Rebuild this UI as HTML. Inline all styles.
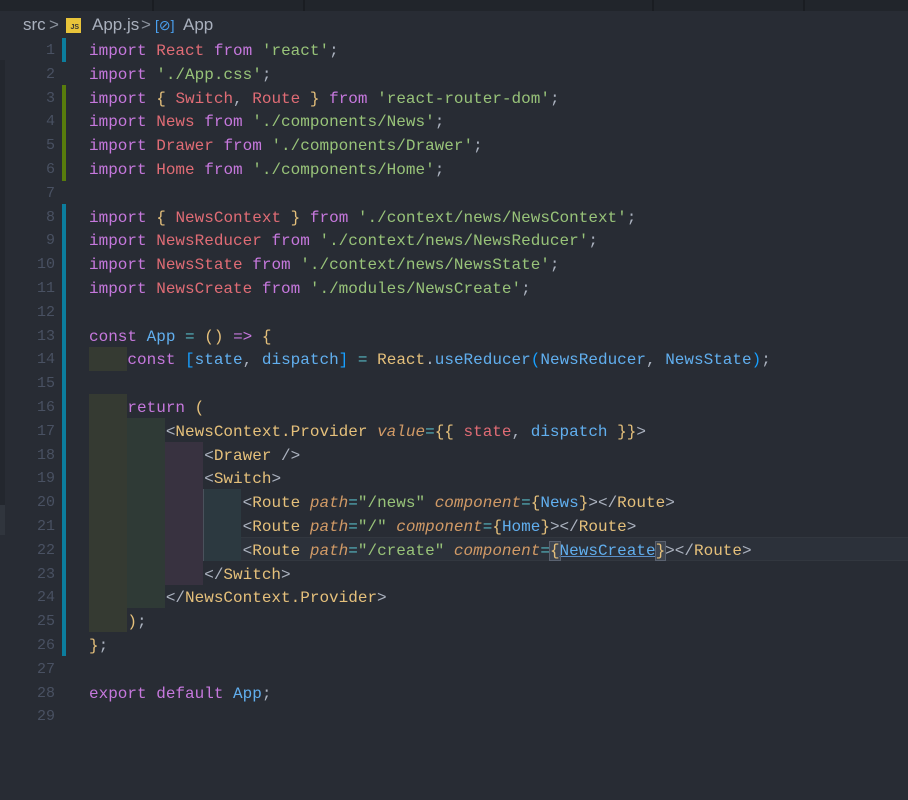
<!DOCTYPE html><html><head><meta charset="utf-8"><style>
body{margin:0;width:908px;height:800px;background:#282c34;overflow:hidden;position:relative;font-family:"Liberation Mono",monospace;}
.tabs{position:absolute;left:0;top:0;width:908px;height:11px;background:#21252b;}
.sep{position:absolute;top:0;width:2px;height:11px;background:#1a1d22}
.bc{position:absolute;top:15px;font:17px "Liberation Sans",sans-serif;color:#a9b0bd;white-space:pre;line-height:20px}
.ln{position:absolute;left:0;width:55px;text-align:right;color:#495162;font-size:15px;height:24px;line-height:24px}
.code{position:absolute;left:89px;font-size:16px;height:24px;line-height:24px;white-space:pre;color:#abb2bf}
.g{position:absolute;width:38px}
.k{color:#c678dd}.v{color:#e06c75}.s{color:#98c379}.y{color:#e5c07b}.o{color:#d19a66}.b{color:#61afef}.c{color:#56b6c2}.i{font-style:italic;color:#d19a66}.p{color:#abb2bf}.br{color:#179fff}
.bar{position:absolute;left:62px;width:4px}
</style></head><body>
<div class="tabs"><div class="sep" style="left:152px"></div><div class="sep" style="left:303px"></div><div class="sep" style="left:652px"></div><div class="sep" style="left:803px"></div></div>
<div style="position:absolute;left:0;top:60px;width:5px;height:450px;background:#23272e"></div>
<div style="position:absolute;left:0;top:505px;width:5px;height:30px;background:#30353d"></div>
<div class="bc" style="left:23px">src</div>
<div class="bc" style="left:49px;color:#8a919c">&gt;</div>
<div style="position:absolute;left:66px;top:18px;width:15px;height:15px;background:#e8c43a;color:#333;font:bold 7px 'Liberation Sans',sans-serif;line-height:20px;text-align:right;box-sizing:border-box;padding-right:2px">JS</div>
<div class="bc" style="left:92px">App.js</div>
<div class="bc" style="left:141px;color:#8a919c">&gt;</div>
<div class="bc" style="left:155px;color:#4aa1f0;font-size:14px">[⊘]</div>
<div class="bc" style="left:183px">App</div>
<!-- current line -->
<div style="position:absolute;left:89px;top:537px;width:819px;height:24px;background:#2c313a;border-top:1px solid #32373f;border-bottom:1px solid #32373f;box-sizing:border-box"></div>
<!-- indent guides -->
<div class="g" style="left:89px;top:347px;height:24px;background:#353a32"></div>
<div class="g" style="left:89px;top:394px;height:238px;background:#353a32"></div>
<div class="g" style="left:127px;top:418px;height:190px;background:#2f3a36"></div>
<div class="g" style="left:165px;top:442px;height:143px;background:#383240"></div>
<div class="g" style="left:203px;top:489px;height:72px;background:#2c3940;border-left:1px solid #4a525c;box-sizing:border-box"></div>
<!-- git bars -->
<div class="bar" style="top:38px;height:24px;background:#0c7d9d"></div>
<div class="bar" style="top:85px;height:96px;background:#587c0c"></div>
<div class="bar" style="top:204px;height:452px;background:#0c7d9d"></div>
<div id="L"></div>
<script>
const lines=[
`<span class=k>import</span> <span class=v>React</span> <span class=k>from</span> <span class=s>'react'</span>;`,
`<span class=k>import</span> <span class=s>'./App.css'</span>;`,
`<span class=k>import</span> <span class=y>{</span> <span class=v>Switch</span>, <span class=v>Route</span> <span class=y>}</span> <span class=k>from</span> <span class=s>'react-router-dom'</span>;`,
`<span class=k>import</span> <span class=v>News</span> <span class=k>from</span> <span class=s>'./components/News'</span>;`,
`<span class=k>import</span> <span class=v>Drawer</span> <span class=k>from</span> <span class=s>'./components/Drawer'</span>;`,
`<span class=k>import</span> <span class=v>Home</span> <span class=k>from</span> <span class=s>'./components/Home'</span>;`,
``,
`<span class=k>import</span> <span class=y>{</span> <span class=v>NewsContext</span> <span class=y>}</span> <span class=k>from</span> <span class=s>'./context/news/NewsContext'</span>;`,
`<span class=k>import</span> <span class=v>NewsReducer</span> <span class=k>from</span> <span class=s>'./context/news/NewsReducer'</span>;`,
`<span class=k>import</span> <span class=v>NewsState</span> <span class=k>from</span> <span class=s>'./context/news/NewsState'</span>;`,
`<span class=k>import</span> <span class=v>NewsCreate</span> <span class=k>from</span> <span class=s>'./modules/NewsCreate'</span>;`,
``,
`<span class=k>const</span> <span class=b>App</span> <span class=c>=</span> <span class=y>()</span> <span class=k>=&gt;</span> <span class=y>{</span>`,
`    <span class=k>const</span> <span class=br>[</span><span class=b>state</span>, <span class=b>dispatch</span><span class=br>]</span> <span class=c>=</span> <span class=y>React</span>.<span class=b>useReducer</span><span class=br>(</span><span class=b>NewsReducer</span>, <span class=b>NewsState</span><span class=br>)</span>;`,
``,
`    <span class=k>return</span> <span class=y>(</span>`,
`        &lt;<span class=y>NewsContext.Provider</span> <span class=i>value</span><span class=c>=</span><span class=y>{{</span> <span class=v>state</span>, <span class=b>dispatch</span> <span class=y>}}</span>&gt;`,
`            &lt;<span class=y>Drawer</span> /&gt;`,
`            &lt;<span class=y>Switch</span>&gt;`,
`                &lt;<span class=y>Route</span> <span class=i>path</span><span class=c>=</span><span class=s>"/news"</span> <span class=i>component</span><span class=c>=</span><span class=y>{</span><span class=b>News</span><span class=y>}</span>&gt;&lt;/<span class=y>Route</span>&gt;`,
`                &lt;<span class=y>Route</span> <span class=i>path</span><span class=c>=</span><span class=s>"/"</span> <span class=i>component</span><span class=c>=</span><span class=y>{</span><span class=b>Home</span><span class=y>}</span>&gt;&lt;/<span class=y>Route</span>&gt;`,
`                &lt;<span class=y>Route</span> <span class=i>path</span><span class=c>=</span><span class=s>"/create"</span> <span class=i>component</span><span class=c>=</span><span class=y style="background:#3e4550;outline:1px solid #5a6270">{</span><span class=b style="text-decoration:underline;text-decoration-color:#5b8fc7">NewsCreate</span><span class=y style="background:#3e4550;outline:1px solid #5a6270">}</span>&gt;&lt;/<span class=y>Route</span>&gt;`,
`            &lt;/<span class=y>Switch</span>&gt;`,
`        &lt;/<span class=y>NewsContext.Provider</span>&gt;`,
`    <span class=y>)</span>;`,
`<span class=y>}</span>;`,
``,
`<span class=k>export</span> <span class=k>default</span> <span class=b>App</span>;`,
``];
let h='';
lines.forEach((l,i)=>{const t=39+i*23.8;
h+=`<div class="ln" style="top:${t}px">${i+1}</div><div class="code" style="top:${t}px">${l}</div>`;});
document.getElementById('L').innerHTML=h;
</script>
</body></html>
